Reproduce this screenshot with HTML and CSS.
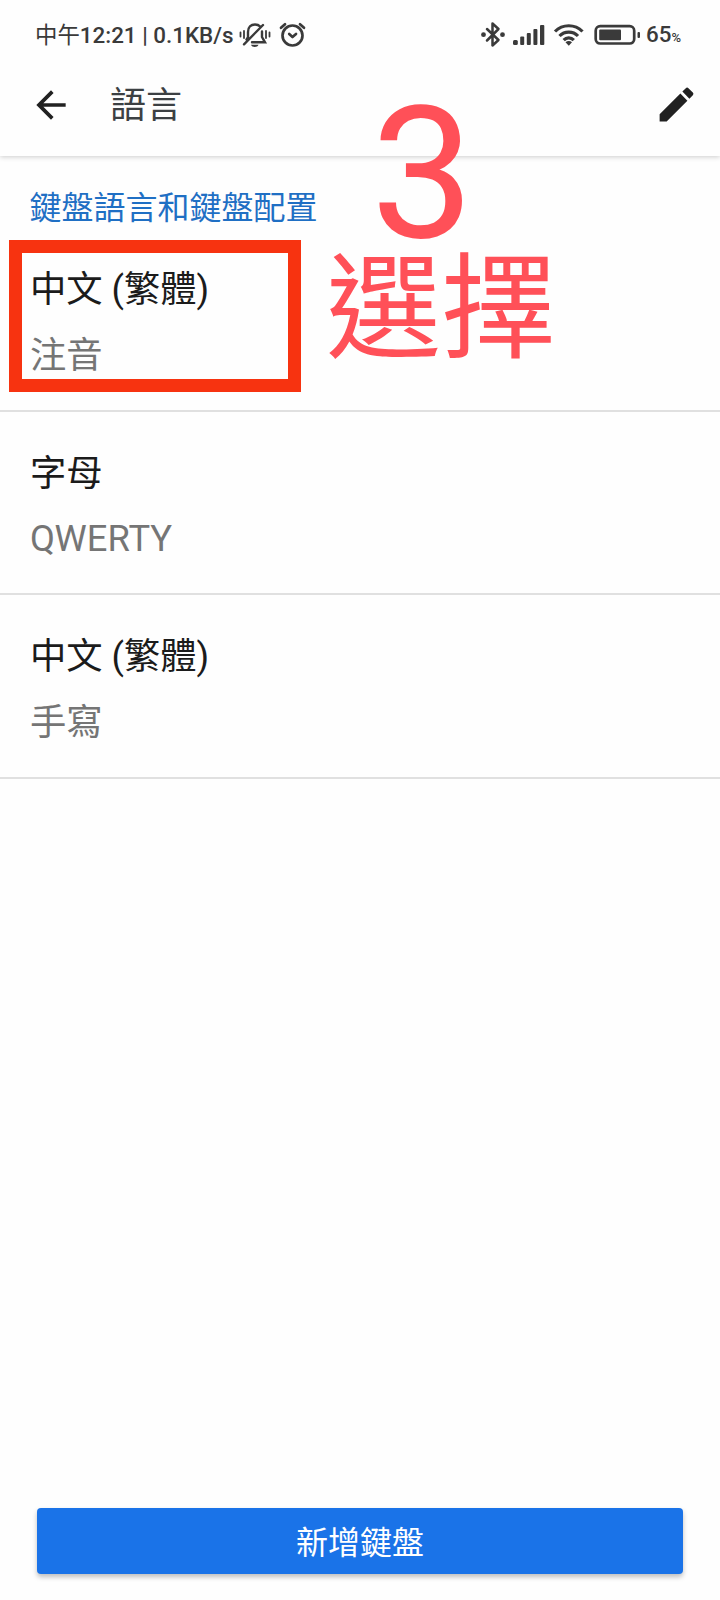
FILE: index.html
```html
<!DOCTYPE html>
<html lang="zh-Hant">
<head>
    <meta charset="UTF-8">
    <meta name="viewport" content="width=device-width, initial-scale=1.0">
    <title>語言</title>
    <link rel="stylesheet" href="styles.css">
</head>
<body>
    <div class="screen">
        <div class="status-bar">
            <div class="status-left">
                <span class="status-text">中午<b>12:21 | 0.1KB/s</b></span>
                <svg class="icon-bell" width="32" height="30" viewBox="0 0 32 30" fill="none" stroke="#3a3a3a" stroke-width="2.4" stroke-linecap="round">
                    <path d="M9 17V12C9 7 12 4.500 16 4.500C18.500 4.500 20 5.300 21.200 6.500M23 11.500V17L26 22.300H13M5 24.300L24 5M9 17L7.500 19.500"/>
                    <path d="M1.500 12.500V16.500M5 11V18M27 11V18M30.500 12.500V16.500" stroke-width="1.800"/>
                    <path d="M12 24.800H19.500C18.500 27.800 13 27.800 12 24.800Z" fill="#3a3a3a" stroke="none"/>
                </svg>
                <svg class="icon-alarm" width="28" height="30" viewBox="0 0 28 30" fill="none" stroke="#3a3a3a" stroke-width="2.700" stroke-linecap="round" stroke-linejoin="round">
                    <circle cx="13.500" cy="15.500" r="10"/>
                    <path d="M10.200 14L13.500 17L17 14M2 7.800L6 4.200M21 4.200L25 7.800"/>
                </svg>
            </div>
            <div class="status-right">
                <svg class="icon-bluetooth" width="26" height="30" viewBox="0 0 26 30" fill="none" stroke="#3a3a3a" stroke-width="2.500" stroke-linejoin="round" stroke-linecap="round">
                    <path d="M7 9L18.500 20L12.500 25.500V3.500L18.500 9L7 20.500"/>
                    <circle cx="3.500" cy="14.700" r="2.400" fill="#3a3a3a" stroke="none"/>
                    <circle cx="22.500" cy="14.700" r="2.400" fill="#3a3a3a" stroke="none"/>
                </svg>
                <svg class="icon-signal" width="34" height="30" viewBox="0 0 34 30" fill="#3a3a3a">
                    <rect x="1" y="20" width="4.800" height="5" rx="1.500"/>
                    <rect x="8.200" y="16.500" width="4" height="8.500" rx="1"/>
                    <rect x="14.800" y="13" width="4" height="12" rx="1"/>
                    <rect x="21.400" y="9" width="4" height="16" rx="1"/>
                    <rect x="28" y="5" width="4.300" height="20" rx="1"/>
                </svg>
                <svg class="icon-wifi" width="32" height="30" viewBox="0 0 32 30" fill="none" stroke="#3a3a3a" stroke-width="3.200">
                    <path d="M2 11.500C9.500 3.800 22 3.800 29.500 11.500M6.500 16C11.500 10.800 20 10.800 25 16M10.700 20.200C13.500 17.200 18 17.200 20.800 20.200"/>
                    <path d="M12.500 22.300C14.500 20.700 17 20.700 19 22.300L15.800 25.700Z" fill="#3a3a3a" stroke="none"/>
                </svg>
                <svg class="icon-battery" width="48" height="30" viewBox="0 0 48 30">
                    <rect x="2.700" y="6.200" width="38.500" height="17.300" rx="4.500" fill="none" stroke="#3a3a3a" stroke-width="2.700"/>
                    <rect x="6.200" y="9.500" width="21.800" height="10.800" rx="1" fill="#3a3a3a"/>
                    <rect x="44.500" y="12" width="2.500" height="6" rx="1" fill="#3a3a3a"/>
                </svg>
                <span class="battery-level">65<small>%</small></span>
            </div>
        </div>

        <header>
            <svg class="icon-back" width="44" height="44" viewBox="0 0 24 24" fill="#212121">
                <path d="M20 11H7.830l5.590-5.590L12 4l-8 8 8 8 1.410-1.410L7.830 13H20v-2z"/>
            </svg>
            <h1>語言</h1>
            <svg class="icon-edit" width="45" height="45" viewBox="0 0 24 24" fill="#212121">
                <path d="M3 17.250V21h3.750L17.810 9.940l-3.750-3.750L3 17.250zM20.710 7.040c.39-.39.39-1.020 0-1.410l-2.340-2.340c-.39-.39-1.020-.39-1.410 0l-1.830 1.830 3.750 3.750 1.830-1.830z"/>
            </svg>
        </header>

        <h2>鍵盤語言和鍵盤配置</h2>
        <ul class="keyboards">
            <li>
                <div class="name">中文 (繁體)</div>
                <div class="layout">注音</div>
            </li>
            <li>
                <div class="name">字母</div>
                <div class="layout">QWERTY</div>
            </li>
            <li>
                <div class="name">中文 (繁體)</div>
                <div class="layout">手寫</div>
            </li>
        </ul>

        <button class="add-button">新增鍵盤</button>

        <!-- step marker -->
        <div class="marker-box"></div>
        <div class="marker-number">3</div>
        <div class="marker-text">選擇</div>
    </div>
</body>
</html>
```
FILE: styles.css
```css
body {
    margin: 0;
    background-color: #fefefe;
    font-family: Roboto, "Noto Sans CJK TC", sans-serif;
}
.screen {
    position: relative;
    display: flex;
    flex-direction: column;
    width: 720px;
    height: 1600px;
    overflow: hidden;
}
.status-bar {
    display: flex;
    justify-content: space-between;
    height: 30px;
    padding: 20px 38px 18px 35px;
    color: #3a3a3a;
}
.status-left,
.status-right {
    display: flex;
    align-items: center;
}
.status-text {
    width: 203px;
    font-size: 22.4px;
    font-weight: 400;
    line-height: 30px;
    white-space: nowrap;
}
.status-text b {
    font-weight: 500;
}
.icon-bell {
    margin-left: 1px;
}
.icon-alarm {
    margin-left: 8px;
}
.icon-signal {
    margin-left: 6px;
}
.icon-wifi {
    margin-left: 7px;
}
.icon-battery {
    margin-left: 8px;
}
.battery-level {
    width: 36px;
    padding-top: 2px;
    margin-left: 5px;
    font-size: 22.4px;
    font-weight: 500;
    line-height: 30px;
    white-space: nowrap;
}
.battery-level small {
    font-size: 13px;
}
header {
    display: flex;
    align-items: center;
    height: 73px;
    padding: 0 21px 15px 29px;
    background-color: #fefefe;
    box-shadow: 0 1px 5px rgba(0, 0, 0, 0.2);
    clip-path: inset(0 0 -8px 0);
}
h1 {
    flex: 1;
    margin: 2px 0 0 37px;
    font-size: 36px;
    font-weight: 400;
    line-height: 72px;
    color: #3c4043;
}
h2 {
    height: 72px;
    margin: 0;
    padding-left: 29.5px;
    font-size: 32px;
    font-weight: 400;
    line-height: 105px;
    color: #1f6fc4;
}
.keyboards {
    margin: 0;
    padding: 0;
    list-style: none;
}
.keyboards li {
    height: 152.5px;
    padding: 29px 30px 0;
    border-bottom: 2px solid #e0e0e0;
    font-size: 36.3px;
    line-height: 65.5px;
}
.name {
    color: #1b1b1b;
}
.layout {
    color: #757575;
}
.add-button {
    height: 66px;
    margin: auto 37px 26px;
    padding: 0 0 3px;
    border: none;
    border-radius: 4px;
    background-color: #1a73e8;
    box-shadow: 0 3px 5px rgba(0, 0, 0, 0.25);
    color: #fff;
    font-family: inherit;
    font-size: 32px;
    cursor: pointer;
}
.marker-box {
    position: absolute;
    top: 240px;
    left: 9px;
    width: 266px;
    height: 126px;
    border: 13px solid #f73310;
}
.marker-number {
    position: absolute;
    top: 100px;
    left: 371px;
    font-size: 183px;
    line-height: 150px;
    color: #ff5058;
}
.marker-text {
    position: absolute;
    top: 250px;
    left: 326px;
    font-size: 115px;
    line-height: 120px;
    color: #ff5058;
}
```
